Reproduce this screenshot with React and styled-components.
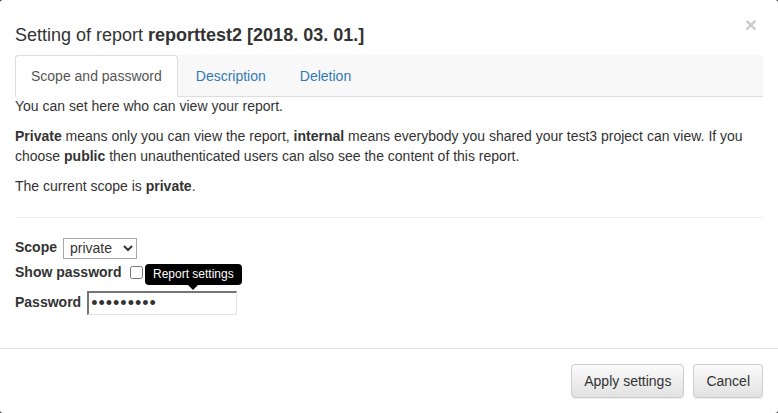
import React from 'react';
import styled, { createGlobalStyle } from 'styled-components';

const GlobalStyle = createGlobalStyle`
  html, body {
    margin: 0;
    padding: 0;
    background: #3b3b3b;
  }
  body {
    font-family: "Liberation Sans", Arial, Helvetica, sans-serif;
    font-size: 14px;
    line-height: 1.42857;
    color: #333;
  }
  * { box-sizing: border-box; }
`;

const Modal = styled.div`
  width: 778px;
  height: 413px;
  background: #fff;
  border-radius: 3px;
  overflow: hidden;
  display: flex;
  flex-direction: column;
`;

const Header = styled.div`
  display: flex;
  justify-content: space-between;
  align-items: flex-start;
  padding: 22px 15px 7px 15px;
`;

const Title = styled.h4`
  margin: 0;
  font-size: 18px;
  font-weight: normal;
  line-height: 26px;
  b { font-weight: bold; }
`;

const Close = styled.button`
  background: none;
  border: 0;
  padding: 0;
  margin: -8px 6px 0 0;
  font-family: inherit;
  font-size: 21px;
  font-weight: bold;
  line-height: 21px;
  color: #000;
  opacity: 0.2;
  text-shadow: 0 1px 0 #fff;
  cursor: pointer;
`;

const Body = styled.div`
  flex: 1;
  padding: 0 15px;
`;

const Tabs = styled.ul`
  display: flex;
  margin: 0;
  padding: 0;
  list-style: none;
  background: #f8f8f8;
  border-bottom: 1px solid #ddd;
`;

const Tab = styled.li`
  margin: 0 2px -1px 0;
  padding: 10px 15px;
  line-height: 20px;
  border: 1px solid transparent;
  border-radius: 4px 4px 0 0;
  color: ${p => (p.$active ? '#555' : '#337ab7')};
  background: ${p => (p.$active ? '#fff' : 'transparent')};
  border-color: ${p => (p.$active ? '#ddd #ddd transparent' : 'transparent')};
  cursor: pointer;
`;

const Para = styled.p`
  margin: 0 0 10px;
`;

const Rule = styled.hr`
  margin: 20px 0;
  border: 0;
  border-top: 1px solid #eee;
`;

const Row = styled.div`
  position: relative;
  display: flex;
  align-items: center;
  height: ${p => p.$h}px;
  margin-bottom: ${p => p.$mb || 0}px;
`;

const Label = styled.label`
  font-weight: bold;
  margin-right: ${p => p.$gap || 4}px;
`;

const Select = styled.select`
  width: 74px;
  height: 21px;
  font-family: inherit;
  font-size: 14px;
  color: #333;
  background: #fff;
  border: 1px solid #a9a9a9;
  border-radius: 0;
  padding: 0 2px;
`;

const Check = styled.input`
  width: 13px;
  height: 13px;
  margin: 0 0 0 4px;
`;

const PasswordInput = styled.input`
  width: 150px;
  height: 24px;
  padding: 0 2px;
  font-family: inherit;
  font-size: 18px;
  letter-spacing: 1px;
  color: #333;
  border-style: solid;
  border-width: 2px 1px 1px 2px;
  border-color: #767676 #e3e3e3 #e3e3e3 #767676;
  outline: none;
`;

const Tooltip = styled.div`
  position: absolute;
  left: 130px;
  top: 1px;
  padding: 2px 8px;
  font-size: 12px;
  line-height: 17px;
  color: #fff;
  background: #000;
  border-radius: 4px;
  white-space: nowrap;
  z-index: 2;

  &::after {
    content: '';
    position: absolute;
    left: 50%;
    bottom: -5px;
    margin-left: -5px;
    border-width: 5px 5px 0;
    border-style: solid;
    border-color: #000 transparent transparent;
  }
`;

const Footer = styled.div`
  display: flex;
  justify-content: flex-end;
  gap: 9px;
  padding: 15px;
  border-top: 1px solid #e5e5e5;
`;

const Button = styled.button`
  padding: 6px 12px;
  font-family: inherit;
  font-size: 14px;
  line-height: 20px;
  color: #333;
  background: linear-gradient(to bottom, #fafafa 0, #e2e2e2 100%);
  border: 1px solid #ccc;
  border-radius: 4px;
  box-shadow: inset 0 1px 0 rgba(255, 255, 255, 0.15), 0 1px 1px rgba(0, 0, 0, 0.075);
  cursor: pointer;
`;

export default function App() {
  return (
    <>
      <GlobalStyle />
      <Modal>
        <Header>
          <Title>
            Setting of report <b>reporttest2 [2018. 03. 01.]</b>
          </Title>
          <Close>×</Close>
        </Header>
        <Body>
          <Tabs>
            <Tab $active>Scope and password</Tab>
            <Tab>Description</Tab>
            <Tab>Deletion</Tab>
          </Tabs>
          <Para>You can set here who can view your report.</Para>
          <Para>
            <b>Private</b> means only you can view the report, <b>internal</b> means everybody you
            shared your test3 project can view. If you choose <b>public</b> then unauthenticated
            users can also see the content of this report.
          </Para>
          <Para>
            The current scope is <b>private</b>.
          </Para>
          <Rule />
          <Row $h={21} $mb={4}>
            <Label $gap={6}>Scope</Label>
            <Select defaultValue="private">
              <option value="private">private</option>
              <option value="internal">internal</option>
              <option value="public">public</option>
            </Select>
          </Row>
          <Row $h={20} $mb={8}>
            <Label $gap={4}>Show password</Label>
            <Check type="checkbox" />
            <Tooltip>Report settings</Tooltip>
          </Row>
          <Row $h={24}>
            <Label $gap={6}>Password</Label>
            <PasswordInput type="password" defaultValue="123456789" />
          </Row>
        </Body>
        <Footer>
          <Button>Apply settings</Button>
          <Button>Cancel</Button>
        </Footer>
      </Modal>
    </>
  );
}
